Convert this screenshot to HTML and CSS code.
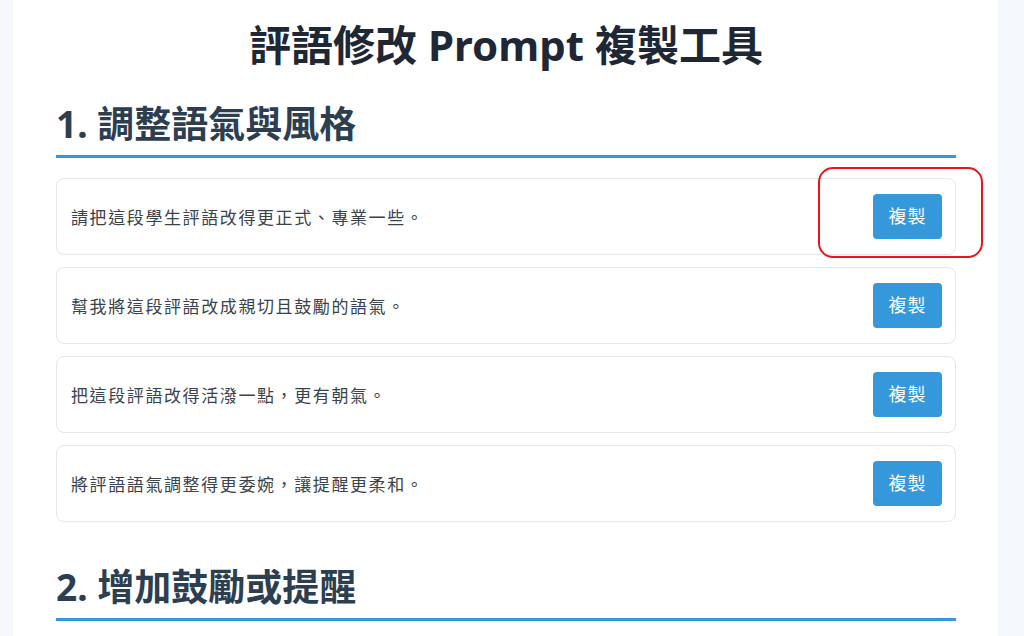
FILE: index.html
```html
<!DOCTYPE html>
<html lang="zh-Hant">
<head>
<meta charset="utf-8">
<title>評語修改 Prompt 複製工具</title>
<link rel="stylesheet" href="styles.css">
</head>
<body>
<div class="container">
  <h1 class="title">評語修改 Prompt 複製工具</h1>

  <section class="section">
    <h2 class="section-title">1. 調整語氣與風格</h2>
    <div class="card-list">
      <div class="card">
        <p class="card-text">請把這段學生評語改得更正式、專業一些。</p>
        <button class="copy-btn">複製</button>
      </div>
      <div class="card">
        <p class="card-text">幫我將這段評語改成親切且鼓勵的語氣。</p>
        <button class="copy-btn">複製</button>
      </div>
      <div class="card">
        <p class="card-text">把這段評語改得活潑一點，更有朝氣。</p>
        <button class="copy-btn">複製</button>
      </div>
      <div class="card">
        <p class="card-text">將評語語氣調整得更委婉，讓提醒更柔和。</p>
        <button class="copy-btn">複製</button>
      </div>
    </div>
  </section>

  <section class="section">
    <h2 class="section-title">2. 增加鼓勵或提醒</h2>
  </section>
</div>
<div class="highlight"></div>
</body>
</html>
```

FILE: styles.css
```css
* { box-sizing: border-box; }

html, body {
  margin: 0;
  padding: 0;
}

body {
  background: #f5f9fd;
  font-family: "Noto Sans", "Noto Sans CJK TC", sans-serif;
  height: 636px;
  overflow: hidden;
  position: relative;
}

.container {
  margin-left: 13px;
  width: 985px;
  min-height: 636px;
  background: #ffffff;
  padding: 21px 42px 0 43px;
}

.title {
  margin: 0;
  font-size: 42px;
  line-height: 48px;
  font-weight: 700;
  color: #1e2733;
  text-align: center;
}

.section {
  margin-top: 32px;
}

.section + .section {
  margin-top: 42px;
}

.section-title {
  margin: 0;
  font-size: 37px;
  line-height: 46px;
  font-weight: 700;
  color: #2c3e50;
  padding-bottom: 8px;
  border-bottom: 3px solid #3498db;
}

.card-list {
  margin-top: 20px;
  display: flex;
  flex-direction: column;
  gap: 12px;
}

.card {
  display: flex;
  align-items: center;
  justify-content: space-between;
  border: 1px solid #e6e6e6;
  border-radius: 8px;
  padding: 15px 13px 15px 14px;
  background: #fff;
}

.card-text {
  margin: 0;
  font-size: 17px;
  letter-spacing: 1.6px;
  color: #3a434d;
}

.copy-btn {
  font-family: "Noto Sans", "Noto Sans CJK TC", sans-serif;
  background: #3498db;
  color: #fff;
  border: none;
  border-radius: 4px;
  font-size: 18px;
  line-height: 21px;
  height: 45px;
  width: 69px;
  padding: 0;
  letter-spacing: 1px;
}

.highlight {
  position: absolute;
  left: 818px;
  top: 167px;
  width: 165px;
  height: 91px;
  border: 2px solid #e8161b;
  border-radius: 15px;
  pointer-events: none;
}
```
